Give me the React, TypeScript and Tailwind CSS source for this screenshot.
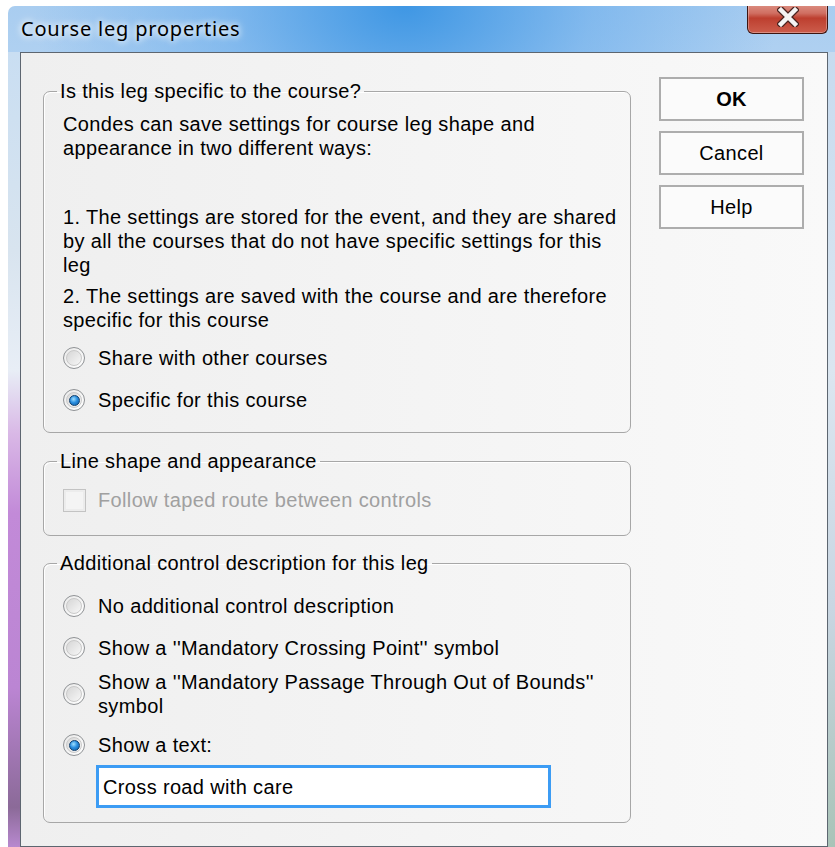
import React from "react";

const Radio = ({ checked = false }: { checked?: boolean }) => (
  <span className="w-[22px] h-[22px] shrink-0 rounded-full border border-[#8f9295] bg-[linear-gradient(135deg,#e9e9e9,#ffffff)] flex items-center justify-center">
    <span className="w-[16px] h-[16px] rounded-full border border-[#c9c9c9] bg-[linear-gradient(135deg,#d6d6d6,#f7f7f7)] flex items-center justify-center">
      {checked && (
        <span className="w-[11px] h-[11px] rounded-full border border-[#0f3f6e] bg-[radial-gradient(circle_at_40%_35%,#9fe0ff_0%,#2a8ee0_45%,#0b5a9e_100%)]" />
      )}
    </span>
  </span>
);

const Option = ({
  checked,
  className = "",
  children,
}: {
  checked?: boolean;
  className?: string;
  children: React.ReactNode;
}) => (
  <div className={`flex items-center gap-[13px] ${className}`}>
    <Radio checked={checked} />
    <span className="leading-[24px]">{children}</span>
  </div>
);

const Group = ({
  title,
  className = "",
  children,
}: {
  title: string;
  className?: string;
  children: React.ReactNode;
}) => (
  <fieldset
    className={`m-0 p-0 min-w-0 border border-[#a7a7a7] rounded-[7px] shadow-[inset_1px_1px_0_#ffffff] ${className}`}
  >
    <legend className="ml-[13px] px-[3px] leading-[24px] whitespace-nowrap">{title}</legend>
    <div className="pl-[19px]">{children}</div>
  </fieldset>
);

const DialogButton = ({ label, bold = false }: { label: string; bold?: boolean }) => (
  <button
    type="button"
    className={`h-[44px] w-[145px] border-2 border-[#adadad] bg-[#fbfbfb] text-black leading-[24px] ${
      bold ? "font-bold" : ""
    }`}
  >
    {label}
  </button>
);

const CloseButton = () => (
  <div className="-mt-[6px] mr-[8px] h-[34px] w-[81px] rounded-b-[6px] border border-t-0 border-[#3d1510] bg-[linear-gradient(to_bottom,#e3a093_0%,#d06f62_40%,#bd3f2f_55%,#cc5d4c_100%)] shadow-[inset_0_0_0_1px_rgba(255,255,255,0.3)] flex items-center justify-center">
    <svg width="22" height="20" viewBox="0 0 22 20">
      <path d="M4 3 L18 17 M18 3 L4 17" stroke="#4a2420" strokeWidth="7" strokeLinecap="square" />
      <path d="M4 3 L18 17 M18 3 L4 17" stroke="#f4f4f4" strokeWidth="4.5" strokeLinecap="square" />
    </svg>
  </div>
);

export default function App() {
  return (
    <div className="w-[835px] h-[847px] overflow-hidden bg-white pt-[6px] pl-[8px] font-['Liberation_Sans',Arial,sans-serif] text-[20px] tracking-[0.35px] text-black">
      <div className="w-[828px] rounded-tl-[7px] overflow-hidden bg-[radial-gradient(ellipse_45%_30%_at_48%_0%,#3f97e4_0%,rgba(90,165,235,0.5)_50%,transparent_100%),linear-gradient(to_bottom,#a9cdf0_0%,#cfe2f5_35%,#d4e4f2_100%)]">
        {/* title bar */}
        <div className="h-[46px] flex items-start justify-between">
          <span className="pl-[13px] pt-[10px] font-['Noto_Sans',sans-serif] text-[20px] tracking-[0.8px] leading-[26px] [text-shadow:0_0_6px_#ffffff,0_0_10px_#ffffff]">
            Course leg properties
          </span>
          <CloseButton />
        </div>

        <div className="flex">
          <div className="w-[12px] h-[795px] bg-[linear-gradient(to_bottom,#c9def2_0%,#d8e4ef_25%,#e8eef6_40%,#d9b8e6_48%,#c28ad8_58%,#bb85d3_80%,#8b6a98_95%,#b889cf_100%)]" />

          {/* client area */}
          <div className="w-[808px] h-[795px] border border-[#5d6670] bg-[linear-gradient(to_right,#efefef,#f9f9f9)] flex pl-[22px]">
            <div className="w-[588px] flex flex-col">
              <Group title="Is this leg specific to the course?" className="mt-[26px]">
                <div className="pt-[9px] leading-[24px]">
                  <div>Condes can save settings for course leg shape and</div>
                  <div>appearance in two different ways:</div>
                  <div className="mt-[45px]">
                    1. The settings are stored for the event, and they are shared
                  </div>
                  <div>by all the courses that do not have specific settings for this</div>
                  <div>leg</div>
                  <div className="mt-[7px]">2. The settings are saved with the course and are therefore</div>
                  <div>specific for this course</div>
                </div>
                <Option className="mt-[11px] h-[30px]">Share with other courses</Option>
                <Option checked className="mt-[12px] h-[30px] mb-[17px]">
                  Specific for this course
                </Option>
              </Group>

              <Group title="Line shape and appearance" className="mt-[16px]">
                <div className="mt-[12px] mb-[20px] h-[30px] flex items-center gap-[12px]">
                  <span className="w-[23px] h-[23px] border border-[#c3c3c3] bg-[#f4f4f4] shadow-[inset_0_0_0_2px_#ececec]" />
                  <span className="text-[#a0a0a0] leading-[24px]">
                    Follow taped route between controls
                  </span>
                </div>
              </Group>

              <Group title="Additional control description for this leg" className="mt-[15px]">
                <Option className="mt-[16px] h-[30px]">No additional control description</Option>
                <Option className="mt-[12px] h-[30px]">
                  Show a ''Mandatory Crossing Point'' symbol
                </Option>
                <Option className="mt-[7px]">
                  Show a ''Mandatory Passage Through Out of Bounds''
                  <br />
                  symbol
                </Option>
                <Option checked className="mt-[12px] h-[30px]">
                  Show a text:
                </Option>
                <div className="ml-[33px] mt-[5px] mb-[14px] w-[455px] h-[43px] border-[3px] border-[#3c9cf4] bg-white flex items-center pl-[4px]">
                  Cross road with care
                </div>
              </Group>
            </div>

            <div className="ml-[28px] pt-[24px] flex flex-col gap-[10px]">
              <DialogButton label="OK" bold />
              <DialogButton label="Cancel" />
              <DialogButton label="Help" />
            </div>
          </div>

          <div className="w-[8px] h-[795px] bg-[linear-gradient(to_bottom,#c7dbef_0%,#dbe6f0_40%,#c9d6e2_70%,#a9c3b7_100%)]" />
        </div>
      </div>
    </div>
  );
}
